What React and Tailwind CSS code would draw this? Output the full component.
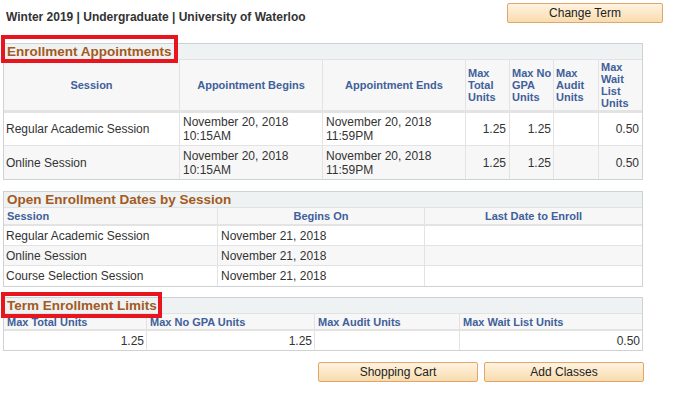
import React from "react";

const F = { fontFamily: '"Liberation Sans", Arial, sans-serif' };

function Btn({ children, className = "" }) {
  return (
    <button
      className={
        "h-[20px] border border-[#e0a66c] rounded-[2px] bg-gradient-to-b from-[#fff3e0] to-[#f8dcae] text-[12px] text-[#222] leading-none flex items-center justify-center " +
        className
      }
    >
      {children}
    </button>
  );
}

function Title({ children }) {
  return (
    <div className="h-[16px] bg-[#eef2f3] border-b border-[#dfe3e5] flex items-center pl-[3px] text-[13.5px] font-bold text-[#a5591c] leading-none">
      {children}
    </div>
  );
}

export default function App() {
  const hd = "text-[11px] font-bold text-[#40609a] leading-[12px]";
  const td = "text-[12px] text-[#333] leading-[14px]";
  return (
    <div style={F} className="relative w-[678px] h-[398px] bg-white overflow-hidden">
      {/* top row */}
      <div className="flex items-start justify-between pt-[3px] pl-[6px] pr-[15px]">
        <div className="text-[12px] font-bold text-[#333] mt-[5px]">
          Winter 2019 | Undergraduate | University of Waterloo
        </div>
        <Btn className="w-[156px]">Change Term</Btn>
      </div>

      {/* Enrollment Appointments */}
      <div className="ml-[3px] mt-[17px] w-[640px] border border-[#cdd2d5]">
        <Title>Enrollment Appointments</Title>
        <div className="grid grid-cols-[176px_143px_143px_44px_44px_45px_43px] bg-[#f7f7f7] border-b-[3px] border-[#e3e3e3] h-[53px]">
          <div className={hd + " border-r border-[#e3e3e3] flex items-center justify-center"}>Session</div>
          <div className={hd + " border-r border-[#e3e3e3] flex items-center justify-center"}>Appointment Begins</div>
          <div className={hd + " border-r border-[#e3e3e3] flex items-center justify-center"}>Appointment Ends</div>
          <div className={hd + " border-r border-[#e3e3e3] flex items-center pl-[2px]"}>Max<br />Total<br />Units</div>
          <div className={hd + " border-r border-[#e3e3e3] flex items-center pl-[2px]"}>Max No<br />GPA<br />Units</div>
          <div className={hd + " border-r border-[#e3e3e3] flex items-center pl-[2px]"}>Max<br />Audit<br />Units</div>
          <div className={hd + " flex items-center pl-[2px]"}>Max<br />Wait<br />List<br />Units</div>
        </div>
        {[
          { bg: "bg-white", s: "Regular Academic Session" },
          { bg: "bg-[#f7f7f7]", s: "Online Session" },
        ].map((r, i) => (
          <div
            key={i}
            className={"grid grid-cols-[176px_143px_143px_44px_44px_45px_43px] h-[33px] " + r.bg + (i === 0 ? " border-b border-[#e3e3e3]" : "")}
          >
            <div className={td + " border-r border-[#e3e3e3] flex items-center pl-[2px]"}>{r.s}</div>
            <div className={td + " border-r border-[#e3e3e3] flex items-center pl-[3px]"}>November 20, 2018<br />10:15AM</div>
            <div className={td + " border-r border-[#e3e3e3] flex items-center pl-[3px]"}>November 20, 2018<br />11:59PM</div>
            <div className={td + " border-r border-[#e3e3e3] flex items-center justify-end pr-[3px]"}>1.25</div>
            <div className={td + " border-r border-[#e3e3e3] flex items-center justify-end pr-[2px]"}>1.25</div>
            <div className={td + " border-r border-[#e3e3e3]"}></div>
            <div className={td + " flex items-center justify-end pr-[3px]"}>0.50</div>
          </div>
        ))}
      </div>

      {/* Open Enrollment Dates */}
      <div className="ml-[3px] mt-[11px] w-[640px] border border-[#cdd2d5]">
        <Title>Open Enrollment Dates by Session</Title>
        <div className="grid grid-cols-[214px_207px_217px] h-[18px] bg-[#f7f7f7] border-b-[2px] border-[#e3e3e3]">
          <div className={hd + " border-r border-[#e3e3e3] flex items-center pl-[3px]"}>Session</div>
          <div className={hd + " border-r border-[#e3e3e3] flex items-center justify-center"}>Begins On</div>
          <div className={hd + " flex items-center justify-center"}>Last Date to Enroll</div>
        </div>
        {["Regular Academic Session", "Online Session", "Course Selection Session"].map((s, i) => (
          <div
            key={i}
            className={"grid grid-cols-[214px_207px_217px] h-[20px] " + (i === 1 ? "bg-[#f7f7f7]" : "bg-white") + (i < 2 ? " border-b border-[#e3e3e3]" : "")}
          >
            <div className={td + " border-r border-[#e3e3e3] flex items-center pl-[2px]"}>{s}</div>
            <div className={td + " border-r border-[#e3e3e3] flex items-center pl-[3px]"}>November 21, 2018</div>
            <div></div>
          </div>
        ))}
      </div>

      {/* Term Enrollment Limits */}
      <div className="ml-[3px] mt-[10px] w-[640px] border border-[#cdd2d5]">
        <Title>Term Enrollment Limits</Title>
        <div className="grid grid-cols-[143px_168px_145px_182px] h-[17px] bg-[#f7f7f7] border-b-[2px] border-[#e3e3e3]">
          <div className={hd + " border-r border-[#e3e3e3] flex items-center pl-[3px]"}>Max Total Units</div>
          <div className={hd + " border-r border-[#e3e3e3] flex items-center pl-[3px]"}>Max No GPA Units</div>
          <div className={hd + " border-r border-[#e3e3e3] flex items-center pl-[3px]"}>Max Audit Units</div>
          <div className={hd + " flex items-center pl-[3px]"}>Max Wait List Units</div>
        </div>
        <div className="grid grid-cols-[143px_168px_145px_182px] h-[19px] bg-white">
          <div className={td + " border-r border-[#e3e3e3] flex items-center justify-end pr-[2px]"}>1.25</div>
          <div className={td + " border-r border-[#e3e3e3] flex items-center justify-end pr-[2px]"}>1.25</div>
          <div className={td + " border-r border-[#e3e3e3]"}></div>
          <div className={td + " flex items-center justify-end pr-[2px]"}>0.50</div>
        </div>
      </div>

      {/* bottom buttons */}
      <div className="flex gap-[6px] ml-[318px] mt-[11px]">
        <Btn className="w-[160px]">Shopping Cart</Btn>
        <Btn className="w-[160px]">Add Classes</Btn>
      </div>

      {/* red annotation boxes */}
      <div className="absolute left-[1px] top-[35px] w-[177px] h-[28px] border-[4px] border-[#e8141e] pointer-events-none"></div>
      <div className="absolute left-[1px] top-[292px] w-[161px] h-[26px] border-[4px] border-[#e8141e] pointer-events-none"></div>
    </div>
  );
}
